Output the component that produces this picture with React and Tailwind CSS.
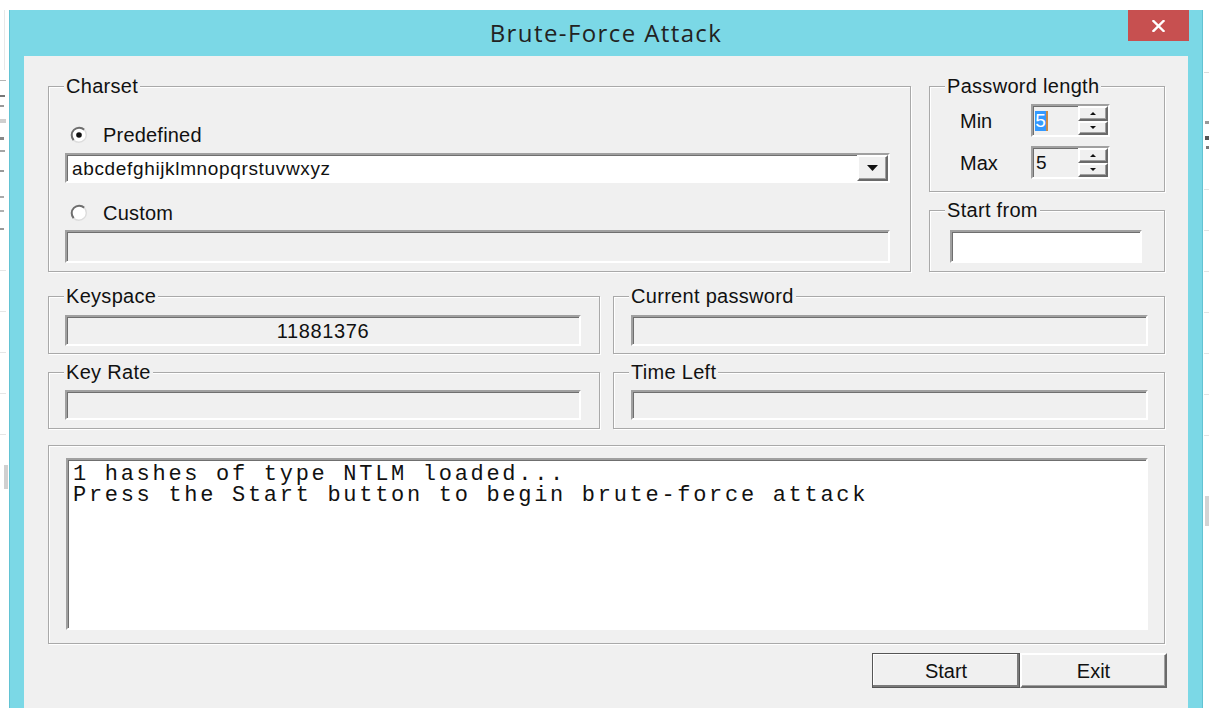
import React from "react";

// Classic Win32 3D edges
const sunken =
  "border-2 border-t-[#a0a0a0] border-l-[#a0a0a0] border-r-white border-b-white shadow-[inset_1px_1px_0_#6f6f6f]";
const raised =
  "border-2 border-t-white border-l-white border-r-[#6a6a6a] border-b-[#6a6a6a] shadow-[inset_-1px_-1px_0_#a0a0a0]";

function Group({ label, className = "", children }) {
  return (
    <div
      className={`relative border border-[#a9a9a9] shadow-[inset_1px_1px_0_#fff,1px_1px_0_#fff] ${className}`}
    >
      {label ? (
        <span className="absolute left-[15px] top-[-12px] bg-[#f0f0f0] px-[2px] text-[20px] leading-[22px] tracking-[0.3px]">
          {label}
        </span>
      ) : null}
      {children}
    </div>
  );
}

function Radio({ checked }) {
  return (
    <svg width="18" height="18" viewBox="0 0 18 18" className="block">
      <circle cx="9" cy="9" r="7.5" fill="#fff" />
      <path d="M3.7 14.3 A7.5 7.5 0 0 1 14.3 3.7" stroke="#6e6e6e" strokeWidth="2" fill="none" />
      <path d="M14.3 3.7 A7.5 7.5 0 0 1 3.7 14.3" stroke="#dcdcdc" strokeWidth="1.4" fill="none" />
      {checked ? <circle cx="9" cy="9" r="2.8" fill="#111" /> : null}
    </svg>
  );
}

function DropButton() {
  return (
    <div className={`flex h-full w-[31px] items-center justify-center bg-[#f0f0f0] ${raised}`}>
      <svg width="11" height="6" viewBox="0 0 11 6" className="block">
        <path d="M0 0 H11 L5.5 6 Z" fill="#111" />
      </svg>
    </div>
  );
}

function SpinButtons() {
  return (
    <div className="flex h-full w-[30px] flex-col">
      <div className={`flex flex-1 items-center justify-center bg-[#f0f0f0] ${raised}`}>
        <svg width="6" height="3" viewBox="0 0 6 3" className="block">
          <path d="M0 3 H6 L3 0 Z" fill="#111" />
        </svg>
      </div>
      <div className={`flex flex-1 items-center justify-center bg-[#f0f0f0] ${raised}`}>
        <svg width="6" height="3" viewBox="0 0 6 3" className="block">
          <path d="M0 0 H6 L3 3 Z" fill="#111" />
        </svg>
      </div>
    </div>
  );
}

function SpinRow({ label, selected }) {
  return (
    <div className="flex h-[33px] items-center">
      <span className="w-[71px] text-[20px] leading-none">{label}</span>
      <div className={`flex h-[33px] w-[79px] items-center bg-[#f0f0f0] ${sunken}`}>
        <div className="flex flex-1 items-center pl-[2px]">
          {selected ? (
            <>
              <span className="flex h-[20px] w-[11px] items-center justify-center bg-[#3399ff] text-[19px] leading-none text-white">
                5
              </span>
              <span className="h-[20px] w-[2px] bg-[#c88a48]" />
            </>
          ) : (
            <span className="pl-[1px] text-[19px] leading-none">5</span>
          )}
        </div>
        <SpinButtons />
      </div>
    </div>
  );
}

function LeftEdge() {
  return (
    <div className="flex w-[9px] shrink-0 flex-col items-start">
      <div className="ml-[4px] h-[60px] w-[1px] bg-[#e8e8e8]" />
      <div className="mt-[10px] h-[1px] w-[6px] bg-[#b5b5b5]" />
      <div className="mt-[14px] h-[2px] w-[5px] bg-[#777]" />
      <div className="mt-[8px] h-[2px] w-[4px] bg-[#999]" />
      <div className="mt-[12px] h-[4px] w-[6px] bg-[#cfcfcf]" />
      <div className="mt-[14px] h-[3px] w-[4px] bg-[#888]" />
      <div className="mt-[10px] h-[2px] w-[5px] bg-[#a5a5a5]" />
      <div className="mt-[18px] h-[2px] w-[4px] bg-[#999]" />
      <div className="mt-[24px] h-[2px] w-[4px] bg-[#aaa]" />
      <div className="mt-[12px] h-[2px] w-[4px] bg-[#b0b0b0]" />
      <div className="mt-[16px] h-[2px] w-[4px] bg-[#999]" />
      <div className="mt-[40px] h-[1px] w-[6px] bg-[#e6e6e6]" />
      <div className="mt-[40px] h-[1px] w-[6px] bg-[#e6e6e6]" />
      <div className="mt-[40px] h-[1px] w-[6px] bg-[#e6e6e6]" />
      <div className="mt-[40px] h-[1px] w-[6px] bg-[#e6e6e6]" />
      <div className="mt-[40px] h-[1px] w-[6px] bg-[#e6e6e6]" />
      <div className="ml-[4px] mt-[30px] h-[24px] w-[4px] bg-[#d0d0d0]" />
    </div>
  );
}

function RightEdge() {
  return (
    <div className="flex w-[6px] shrink-0 flex-col items-end">
      <div className="mt-[62px] h-[1px] w-[5px] bg-[#dcdcdc]" />
      <div className="mt-[48px] h-[3px] w-[4px] bg-[#999]" />
      <div className="mt-[12px] h-[4px] w-[4px] bg-[#555]" />
      <div className="mt-[6px] h-[3px] w-[3px] bg-[#777]" />
      <div className="mt-[40px] h-[1px] w-[5px] bg-[#e4e4e4]" />
      <div className="mt-[40px] h-[1px] w-[5px] bg-[#e4e4e4]" />
      <div className="mt-[40px] h-[1px] w-[5px] bg-[#e4e4e4]" />
      <div className="mt-[40px] h-[1px] w-[5px] bg-[#e4e4e4]" />
      <div className="mt-[40px] h-[1px] w-[5px] bg-[#e4e4e4]" />
      <div className="mt-[40px] h-[1px] w-[5px] bg-[#e4e4e4]" />
      <div className="mt-[40px] h-[1px] w-[5px] bg-[#e4e4e4]" />
      <div className="mt-[60px] h-[30px] w-[4px] bg-[#d4d4d4]" />
    </div>
  );
}

function TitleBar() {
  return (
    <div className="grid h-[46px] shrink-0 grid-cols-[1fr_auto_1fr]">
      <div />
      <div className="flex items-center font-['Open_Sans',sans-serif] text-[24px] leading-none tracking-[1.4px] text-[#222]">
        Brute-Force Attack
      </div>
      <div className="flex justify-end pr-[13px]">
        <div className="flex h-[31px] w-[61px] items-center justify-center bg-[#c75050]">
          <svg width="13" height="12" viewBox="0 0 13 12" className="block">
            <path d="M1.5 1 L11.5 11 M11.5 1 L1.5 11" stroke="#fff" strokeWidth="2.4" strokeLinecap="square" />
          </svg>
        </div>
      </div>
    </div>
  );
}

function Client() {
  return (
    <div className="flex w-[1164px] flex-col bg-[#f0f0f0] pl-[24px] pr-[23px] pt-[30px]">
      {/* Charset + length / start */}
      <div className="flex gap-[18px]">
        <Group label="Charset" className="h-[186px] w-[863px] pl-[16px] pr-[20px] pt-[36px]">
          <div className="flex h-[24px] items-center">
            <div className="ml-[5px]">
              <Radio checked />
            </div>
            <span className="ml-[15px] text-[20px] leading-none tracking-[0.2px]">Predefined</span>
          </div>
          <div className={`mt-[6px] flex h-[30px] items-center bg-white ${sunken}`}>
            <span className="flex-1 pl-[5px] text-[19px] leading-none tracking-[0.65px]">
              abcdefghijklmnopqrstuvwxyz
            </span>
            <DropButton />
          </div>
          <div className="mt-[18px] flex h-[24px] items-center">
            <div className="ml-[5px]">
              <Radio />
            </div>
            <span className="ml-[15px] text-[20px] leading-none tracking-[0.2px]">Custom</span>
          </div>
          <div className={`mt-[5px] h-[33px] bg-[#f0f0f0] ${sunken}`} />
        </Group>

        <div className="flex w-[236px] flex-col gap-[18px]">
          <Group label="Password length" className="h-[106px] pl-[30px] pt-[17px]">
            <div className="flex flex-col gap-[9px]">
              <SpinRow label="Min" selected />
              <SpinRow label="Max" />
            </div>
          </Group>
          <Group label="Start from" className="h-[62px] pl-[20px] pt-[19px]">
            <div className={`h-[33px] w-[192px] bg-white ${sunken}`} />
          </Group>
        </div>
      </div>

      {/* Statistics */}
      <div className="mt-[24px] flex gap-[13px]">
        <Group label="Keyspace" className="h-[58px] w-[552px] pl-[16px] pr-[18px] pt-[18px]">
          <div className={`flex h-[31px] items-center justify-center bg-[#f0f0f0] text-[20px] leading-none tracking-[0.6px] ${sunken}`}>
            11881376
          </div>
        </Group>
        <Group label="Current password" className="h-[58px] w-[552px] pl-[17px] pr-[16px] pt-[18px]">
          <div className={`h-[31px] bg-[#f0f0f0] ${sunken}`} />
        </Group>
      </div>
      <div className="mt-[18px] flex gap-[13px]">
        <Group label="Key Rate" className="h-[57px] w-[552px] pl-[16px] pr-[18px] pt-[17px]">
          <div className={`h-[30px] bg-[#f0f0f0] ${sunken}`} />
        </Group>
        <Group label="Time Left" className="h-[57px] w-[552px] pl-[17px] pr-[16px] pt-[17px]">
          <div className={`h-[30px] bg-[#f0f0f0] ${sunken}`} />
        </Group>
      </div>

      {/* Log */}
      <Group className="mt-[16px] h-[199px] pl-[17px] pr-[16px] pt-[12px]">
        <div
          className={`h-[172px] whitespace-pre bg-white pl-[5px] pt-[4px] font-['Liberation_Mono',monospace] text-[22px] leading-[21px] tracking-[2.7px] text-[#111] ${sunken}`}
        >
          {"1 hashes of type NTLM loaded...\nPress the Start button to begin brute-force attack"}
        </div>
      </Group>

      {/* Actions */}
      <div className="-mr-[2px] mt-[9px] flex justify-end">
        <div className="flex h-[35px] w-[148px] items-center justify-center border border-[#555] bg-[#f0f0f0] text-[20px] leading-none shadow-[inset_-2px_-2px_0_#7a7a7a,inset_1px_1px_0_#fff]">
          Start
        </div>
        <div className={`flex h-[35px] w-[147px] items-center justify-center bg-[#f0f0f0] text-[20px] leading-none ${raised}`}>
          Exit
        </div>
      </div>
    </div>
  );
}

export default function App() {
  return (
    <div className="flex h-[708px] w-[1209px] flex-col overflow-hidden bg-white font-[Liberation_Sans,Arial,sans-serif] text-[#111]">
      <div className="h-[10px] shrink-0" />
      <div className="flex min-h-0 flex-1">
        <LeftEdge />
        <div className="flex w-[1194px] shrink-0 flex-col border-x border-[#62c3d3] bg-[#7bd8e6]">
          <TitleBar />
          <div className="flex min-h-0 flex-1 px-[14px]">
            <Client />
          </div>
        </div>
        <RightEdge />
      </div>
    </div>
  );
}
